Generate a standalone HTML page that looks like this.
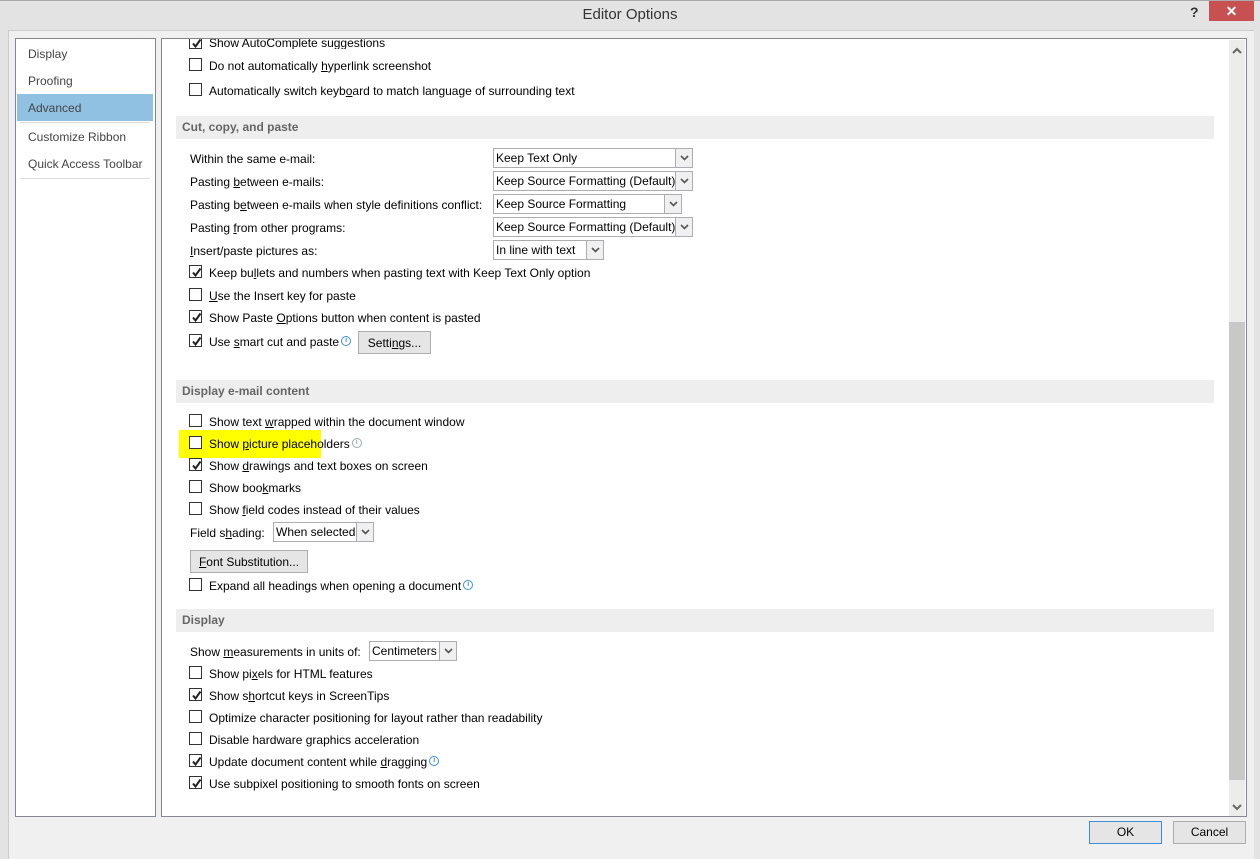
<!DOCTYPE html>
<html><head><meta charset="utf-8"><style>
*{margin:0;padding:0;box-sizing:border-box}
body{width:1260px;height:859px;background:#e3e3e3;font-family:"Liberation Sans",sans-serif;font-size:12px;color:#000;position:relative;overflow:hidden}
.a{position:absolute}
.t{position:absolute;line-height:16px;white-space:nowrap}
.cb{position:absolute;width:13px;height:13px;border:1px solid #333;background:#fff}
.cb svg{position:absolute;left:1px;top:1px}
.sec{position:absolute;left:176px;width:1038px;background:#eeeeee;color:#666;font-weight:bold;padding-left:6px;line-height:22px;height:23px;font-size:12px}
.dd{position:absolute;height:20px;border:1px solid #abadb3;background:#fff;line-height:19px;padding-left:2px;white-space:nowrap}
.dd .ar{position:absolute;right:0;top:0;width:17px;height:18px;border-left:1px solid #abadb3;background:#f0f0f0}
.btn{position:absolute;border:1px solid #adadad;background:#e5e5e5;text-align:center;white-space:nowrap}
.nav{position:absolute;left:28px;line-height:16px;color:#444}
u{text-decoration:underline}
.i{display:inline-block;width:10px;height:10px;border:1px solid #3c8fd6;border-radius:50%;font-size:7px;line-height:8px;text-align:center;color:#3c8fd6;vertical-align:4px;margin-left:2px;font-weight:bold}
</style></head><body>
<div class="a" style="left:0;top:0;width:1260px;height:1px;background:#aaa"></div>
<div class="t" style="left:0;width:1260px;text-align:center;top:7px;font-size:15px;color:#333">Editor Options</div>
<div class="t" style="left:1190px;top:4px;font-size:14px;font-weight:bold;color:#333">?</div>
<div class="a" style="left:1209px;top:1px;width:45px;height:20px;background:#c75050;color:#fff;text-align:center;font-size:14px;line-height:20px;font-weight:bold">✕</div>
<div class="a" style="left:8px;top:30px;width:1246px;height:829px;background:#f0f0f0;border-top:1px solid #ccc;border-left:1px solid #ccc"></div>
<div class="a" style="left:15px;top:38px;width:141px;height:779px;background:#fff;border:1px solid #828790"></div>
<div class="nav" style="top:46px">Display</div>
<div class="nav" style="top:73px">Proofing</div>
<div class="a" style="left:17px;top:94px;width:136px;height:27px;background:#91c1e2"></div>
<div class="nav" style="top:100px">Advanced</div>
<div class="a" style="left:20px;top:122px;width:130px;height:1px;background:#ddd"></div>
<div class="nav" style="top:129px">Customize Ribbon</div>
<div class="nav" style="top:156px">Quick Access Toolbar</div>
<div class="a" style="left:20px;top:178px;width:130px;height:1px;background:#ddd"></div>
<div class="a" style="left:161px;top:38px;width:1086px;height:779px;background:#fff;border:1px solid #828790;overflow:hidden">
 <div class="a" style="left:1067px;top:1px;width:16px;height:776px;background:#ececec"></div>
 <div class="a" style="left:1067px;top:283px;width:16px;height:458px;background:#c8c8c8"></div>
 <svg class="a" style="left:1070px;top:8px" width="10" height="8"><path d="M1 6 L5 2 L9 6" stroke="#666" stroke-width="2" fill="none"/></svg>
 <svg class="a" style="left:1070px;top:764px" width="10" height="8"><path d="M1 2 L5 6 L9 2" stroke="#666" stroke-width="2" fill="none"/></svg>
</div>
<div class="a" style="left:179px;top:430px;width:142px;height:28px;background:#ffff00"></div>
<div id="c"></div>
<div class="btn" style="left:1089px;top:821px;width:73px;height:23px;line-height:21px;border-color:#3c8fd6">OK</div>
<div class="btn" style="left:1173px;top:821px;width:73px;height:23px;line-height:21px">Cancel</div>
<script>
var C='<svg width="11" height="11"><path d="M2 5.5 L4.5 8.5 L9.5 1.5" stroke="#222" stroke-width="2" fill="none"/></svg>';
var rows=[[43,1,'Show AutoComplete suggestions'],[65,0,'Do not automatically <u>h</u>yperlink screenshot'],[90,0,'Automatically switch keyb<u>o</u>ard to match language of surrounding text'],
[272,1,'Keep bu<u>l</u>lets and numbers when pasting text with Keep Text Only option'],[295,0,'<u>U</u>se the Insert key for paste'],[317,1,'Show Paste <u>O</u>ptions button when content is pasted'],[341,1,'Use <u>s</u>mart cut and paste<span class="i">i</span>'],
[421,0,'Show text <u>w</u>rapped within the document window'],[443,0,'Show <u>p</u>icture placeholders<span class="i" style="border-color:#9aa;color:#9aa">i</span>'],[465,1,'Show <u>d</u>rawings and text boxes on screen'],[487,0,'Show boo<u>k</u>marks'],[509,0,'Show <u>f</u>ield codes instead of their values'],[585,0,'Expand all headings when opening a document<span class="i">i</span>'],
[673,0,'Show pi<u>x</u>els for HTML features'],[695,1,'Show s<u>h</u>ortcut keys in ScreenTips'],[717,0,'Optimize character positioning for layout rather than readability'],[739,0,'Disable hardware <u>g</u>raphics acceleration'],[761,1,'Update document content while <u>d</u>ragging<span class="i">i</span>'],[783,1,'Use subpixel positioning to smooth fonts on screen']];
var h='';
rows.forEach(function(r){var y=r[0];
 var top=y-7;
 if(y==43){h+='<div class="a" style="left:189px;top:39px;width:14px;height:10px;overflow:hidden"><div class="cb" style="left:0;top:-3px">'+C+'</div></div><div class="a" style="left:209px;top:39px;height:10px;overflow:hidden;width:200px"><div class="t" style="left:0;top:-4px">'+r[2]+'</div></div>';return;}
 h+='<div class="cb" style="left:189px;top:'+top+'px">'+(r[1]?C:'')+'</div><div class="t" style="left:209px;top:'+(y-7)+'px">'+r[2]+'</div>';});
var labels=[[158,'Within the same e-mail:'],[181,'Pasting <u>b</u>etween e-mails:'],[204,'Pasting b<u>e</u>tween e-mails when style definitions conflict:'],[227,'Pasting <u>f</u>rom other programs:'],[250,'<u>I</u>nsert/paste pictures as:'],[532,'Field s<u>h</u>ading:'],[651,'Show <u>m</u>easurements in units of:']];
labels.forEach(function(l){h+='<div class="t" style="left:190px;top:'+(l[0]-7)+'px">'+l[1]+'</div>';});
var dds=[[158,493,200,'Keep Text Only'],[181,493,200,'Keep Source Formatting (Default)'],[204,493,189,'Keep Source Formatting'],[227,493,200,'Keep Source Formatting (Default)'],[250,493,111,'In line with text'],[532,273,101,'When selected'],[651,369,88,'Centimeters']];
dds.forEach(function(d){h+='<div class="dd" style="top:'+(d[0]-10)+'px;left:'+d[1]+'px;width:'+d[2]+'px">'+d[3]+'<div class="ar"><svg width="17" height="18"><path d="M5 7 L8.5 10.5 L12 7" stroke="#555" stroke-width="1.6" fill="none"/></svg></div></div>';});
h+='<div class="sec" style="top:116px">Cut, copy, and paste</div><div class="sec" style="top:380px">Display e-mail content</div><div class="sec" style="top:609px">Display</div>';
h+='<div class="btn" style="left:358px;top:331px;width:73px;height:23px;line-height:22px">Setti<u>n</u>gs...</div>';
h+='<div class="btn" style="left:190px;top:550px;width:118px;height:23px;line-height:22px"><u>F</u>ont Substitution...</div>';
document.getElementById('c').innerHTML=h;
</script>
</body></html>
